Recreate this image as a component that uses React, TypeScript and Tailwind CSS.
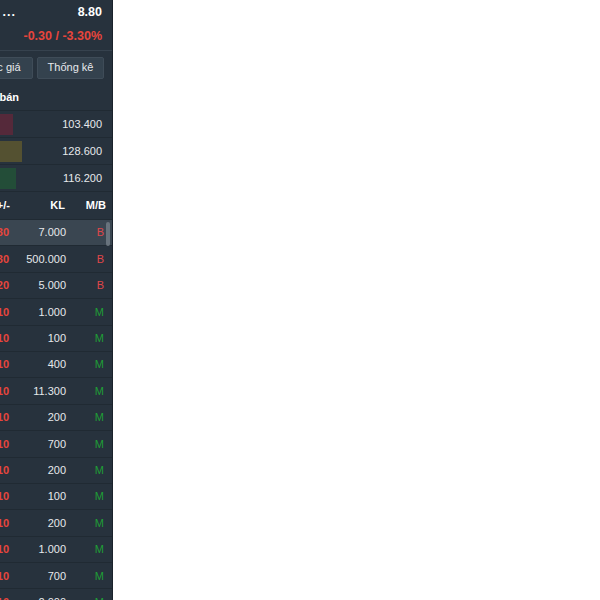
import React from "react";

const trades = [
  { chg: "-0.30", kl: "7.000", side: "B" },
  { chg: "-0.30", kl: "500.000", side: "B" },
  { chg: "-0.20", kl: "5.000", side: "B" },
  { chg: "-0.10", kl: "1.000", side: "M" },
  { chg: "-0.10", kl: "100", side: "M" },
  { chg: "-0.10", kl: "400", side: "M" },
  { chg: "-0.10", kl: "11.300", side: "M" },
  { chg: "-0.10", kl: "200", side: "M" },
  { chg: "-0.10", kl: "700", side: "M" },
  { chg: "-0.10", kl: "200", side: "M" },
  { chg: "-0.10", kl: "100", side: "M" },
  { chg: "-0.10", kl: "200", side: "M" },
  { chg: "-0.10", kl: "1.000", side: "M" },
  { chg: "-0.10", kl: "700", side: "M" },
  { chg: "-0.10", kl: "2.000", side: "M" },
];

const volumes = [
  { bar: "w-[87px] bg-[#55293a]", value: "103.400" },
  { bar: "w-[96px] bg-[#545131]", value: "128.600" },
  { bar: "w-[90px] bg-[#234d38]", value: "116.200" },
];

export default function App() {
  return (
    <div
      className="flex h-[600px] w-[600px] bg-white text-[11px] text-[#e6e9ec]"
      style={{ fontFamily: '"Liberation Sans", Arial, sans-serif' }}
    >
      {/* SIDE PANEL (scrolled left, clipped) */}
      <div className="relative flex h-full w-[113px] shrink-0 justify-end overflow-hidden border-r border-[#1a222b] bg-[#27323d]">
        <div className="flex w-[260px] shrink-0 flex-col">
          {/* PRICE */}
          <div className="flex h-[25px] shrink-0 items-center justify-end pr-[10px] text-[12.5px] font-bold text-white">
            <span className="truncate tracking-[1px]">CTCP Đầu tư ...</span>
            <span className="w-[86px] shrink-0 text-right">8.80</span>
          </div>
          <div className="flex h-[26px] shrink-0 items-start justify-end border-b border-[#36424e] pr-[10px] pt-[2px] text-[12.5px] font-bold text-[#e7453c]">
            -0.30 / -3.30%
          </div>

          {/* TABS */}
          <div className="flex h-[33px] shrink-0 items-center justify-end gap-[4px] pr-[8px]">
            <button className="h-[22px] w-[70px] rounded-[2px] border border-[#3f4c58] bg-[#34424e] text-[11px] text-[#e6e9ec]">
              Khớp lệnh
            </button>
            <button className="h-[22px] w-[70px] rounded-[2px] border border-[#3f4c58] bg-[#34424e] text-[11px] text-[#e6e9ec]">
              Bước giá
            </button>
            <button className="h-[22px] w-[67px] rounded-[2px] border border-[#3f4c58] bg-[#34424e] text-[11px] text-[#e6e9ec]">
              Thống kê
            </button>
          </div>

          {/* VOLUME */}
          <div className="flex h-[27px] shrink-0 items-center justify-end border-b border-[#202a33] font-bold text-white">
            <span>KL mua/bán</span>
            <span className="w-[93px] shrink-0" />
          </div>
          {volumes.map((v, i) => (
            <div
              key={i}
              className="flex h-[27px] shrink-0 items-center justify-end border-b border-[#202a33] pr-[10px]"
            >
              <div className="flex w-[100px] shrink-0">
                <div className={`h-[21px] ${v.bar}`} />
              </div>
              <span className="w-[76px] shrink-0 text-right text-[#e6e9ec]">
                {v.value}
              </span>
            </div>
          ))}

          {/* TRADES HEADER */}
          <div className="flex h-[28px] shrink-0 items-center justify-end border-b border-[#202a33] pr-[6px] font-bold text-white">
            <span className="w-[50px] shrink-0 text-right">Giá</span>
            <span className="w-[50px] shrink-0 text-right">+/-</span>
            <span className="w-[55px] shrink-0 text-right">KL</span>
            <span className="w-[41px] shrink-0 text-right">M/B</span>
          </div>

          {trades.map((t, i) => (
            <div
              key={i}
              className={`flex h-[26.4px] shrink-0 items-center justify-end border-b border-[#202a33] pr-[8px] ${
                i === 0 ? "bg-[#3a4651]" : ""
              }`}
            >
              <span className="w-[50px] shrink-0 text-right font-bold text-[#e7453c]">
                8.80
              </span>
              <span className="w-[50px] shrink-0 text-right font-bold text-[#e7453c]">
                {t.chg}
              </span>
              <span className="w-[57px] shrink-0 text-right">{t.kl}</span>
              <span
                className={`w-[38px] shrink-0 text-right text-[11px] ${
                  t.side === "B" ? "text-[#e0474a]" : "text-[#1f9e36]"
                }`}
              >
                {t.side}
              </span>
            </div>
          ))}
        </div>

        {/* SCROLLBAR THUMB */}
        <div className="absolute right-[2px] top-[222px] h-[24px] w-[4px] rounded-full bg-[#68737d]" />
      </div>
      <div className="flex-1" />
    </div>
  );
}
